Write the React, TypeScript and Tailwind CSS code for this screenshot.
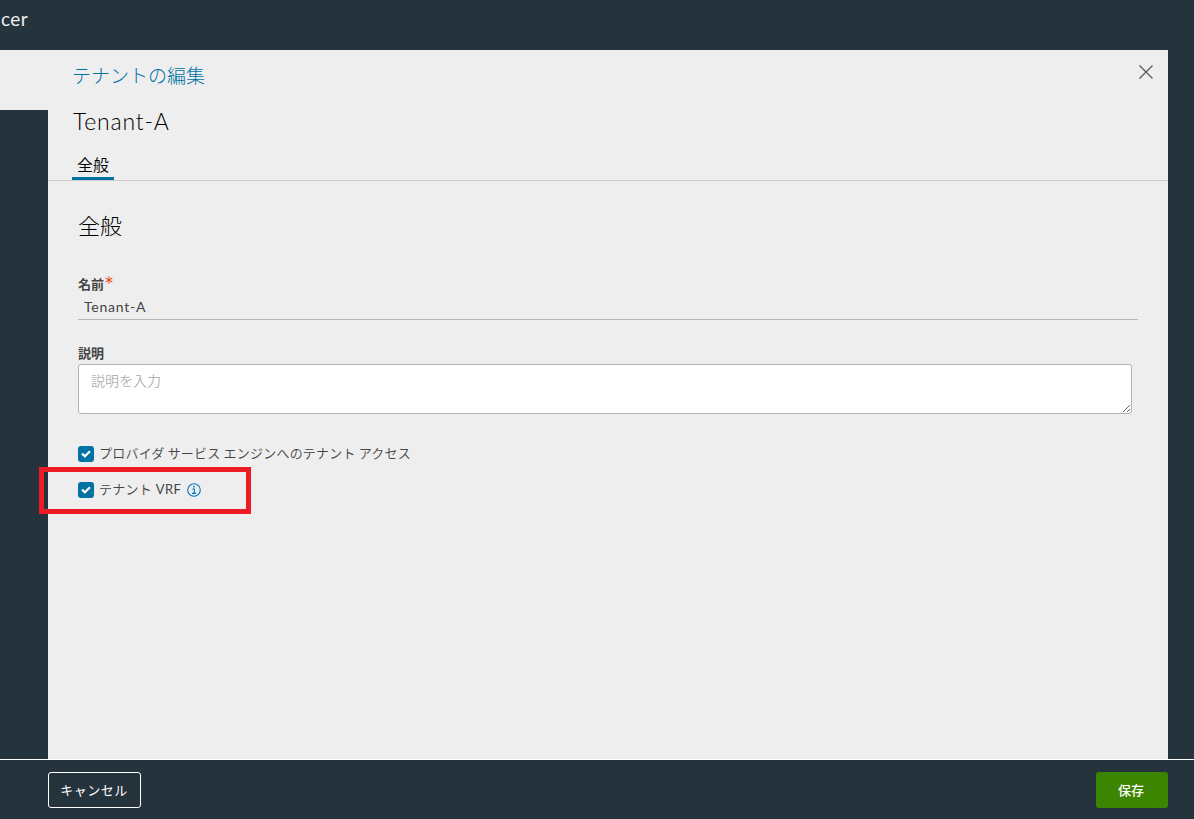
import { ReactNode, useState } from "react";

const ja = "font-['Noto_Sans_CJK_JP',sans-serif]";
const latin = "font-['Lato','Noto_Sans_CJK_JP',sans-serif]";

function CheckMark() {
    return (
        <svg viewBox="0 0 16 16" className="size-4" fill="none">
            <path d="M4 7.6 L6.9 10.3 L12 5.2" stroke="#fff" strokeWidth="2.2" />
        </svg>
    );
}

function InfoIcon() {
    return (
        <svg viewBox="0 0 14 14" className="size-3.5" fill="none" stroke="#0079b8">
            <circle cx="7" cy="7" r="6.3" strokeWidth="1.1" />
            <path d="M5.3 6 H7.3 V10.3 M5 10.4 H9.2" strokeWidth="1.2" />
            <circle cx="7" cy="3.7" r="0.9" fill="#0079b8" stroke="none" />
        </svg>
    );
}

function CheckRow({ children }: { children: ReactNode }) {
    const [checked, setChecked] = useState(true);

    return (
        <button
            type="button"
            role="checkbox"
            aria-checked={checked}
            onClick={() => setChecked(!checked)}
            className="flex h-5 items-center text-[13px] leading-5 font-[350] tracking-[0.21px] text-[#454545]"
        >
            <span className={`mt-0.5 mr-[5px] size-4 rounded-[3px] ${checked ? "bg-[#0072a3]" : "border border-[#b3b3b3]"}`}>
                {checked && <CheckMark />}
            </span>
            {children}
        </button>
    );
}

function TenantForm() {
    return (
        <div className="flex flex-col items-start pt-7 pl-[30px]">
            <h2 className="h-8 text-[22px] leading-[31px] font-light text-black">全般</h2>

            <label className="mt-[33px] flex h-5 text-[13px] leading-5 font-bold text-[#454545]">
                名前
                <svg viewBox="0 0 8 8" className="mt-0.5 ml-px size-2" stroke="#e8502f" strokeWidth="1.1">
                    <path d="M4 0.3 V7.7 M0.7 2.1 L7.3 5.9 M7.3 2.1 L0.7 5.9" />
                </svg>
            </label>
            <input
                defaultValue="Tenant-A"
                className={`h-[26px] w-[1060px] border-b border-[#b3b3b3] pl-1.5 text-sm tracking-[0.75px] text-[#444] outline-none ${latin}`}
            />

            <label className="mt-[23px] h-5 text-[13px] leading-5 font-bold text-[#454545]">説明</label>
            <textarea
                placeholder="説明を入力"
                className="mt-px h-[50px] w-[1054px] resize rounded-[3px] border border-[#b3b3b3] bg-white px-3 py-[5px] text-sm leading-5 font-[350] outline-none placeholder:text-[#b3b3b3]"
            />

            <div className="mt-[29px] flex flex-col gap-4">
                <CheckRow>プロバイダ サービス エンジンへのテナント アクセス</CheckRow>
                <CheckRow>
                    テナント
                    <span className={`ml-1 font-normal tracking-[0.4px] ${latin}`}>VRF</span>
                    <span className="mt-0.5 ml-1.5"><InfoIcon /></span>
                </CheckRow>
            </div>
        </div>
    );
}

export default function App() {
    return (
        <div className={`relative flex h-[819px] w-[1194px] flex-col overflow-hidden bg-[#25333d] ${ja}`}>
            <header className={`flex h-[50px] items-center pb-3 pl-px text-[19px] tracking-[0.4px] text-[#eee] ${latin}`}>cer</header>

            <div className="flex h-[709px]">
                <div className="h-[60px] w-12 bg-[#eee]" />
                <section className="w-[1120px] bg-[#eee]">
                    <div className="flex justify-between pt-[9px] pr-[15px] pl-6">
                        <h1 className="h-8 text-[19px] leading-8 font-light text-[#0072a3]">テナントの編集</h1>
                        <button type="button" aria-label="閉じる" className="mt-1.5 size-3.5">
                            <svg viewBox="0 0 14 14" className="size-3.5" stroke="#565656" strokeWidth="1.2">
                                <path d="M0.5 0.5 L13.5 13.5 M13.5 0.5 L0.5 13.5" />
                            </svg>
                        </button>
                    </div>
                    <p className={`mt-3.5 h-8 pl-[25px] text-[23px] leading-8 font-light tracking-[0.8px] text-black ${latin}`}>
                        Tenant-A
                    </p>
                    <nav className="mt-[11px] flex h-[33px] border-b border-[#ccc] pl-6">
                        <button type="button" className="h-8 w-[42px] border-b-3 border-[#0072a3] text-base leading-[33px] font-[350] text-black">
                            全般
                        </button>
                    </nav>
                    <TenantForm />
                </section>
            </div>

            <footer className="flex h-[60px] items-start justify-between border-t border-white pt-3 pr-[26px] pl-12 text-[13px] text-white">
                <button type="button" className="h-9 w-[93px] rounded-[3px] border border-white pr-px tracking-[0.5px]">
                    キャンセル
                </button>
                <button type="button" className="h-9 w-[72px] rounded-[3px] bg-[#3c8500] pr-0.5 font-medium">
                    保存
                </button>
            </footer>

            {/* callout around the VRF option */}
            <div className="pointer-events-none absolute top-[467px] left-[39px] h-[47px] w-[212px] border-5 border-[#ed1c24]" />
        </div>
    );
}
